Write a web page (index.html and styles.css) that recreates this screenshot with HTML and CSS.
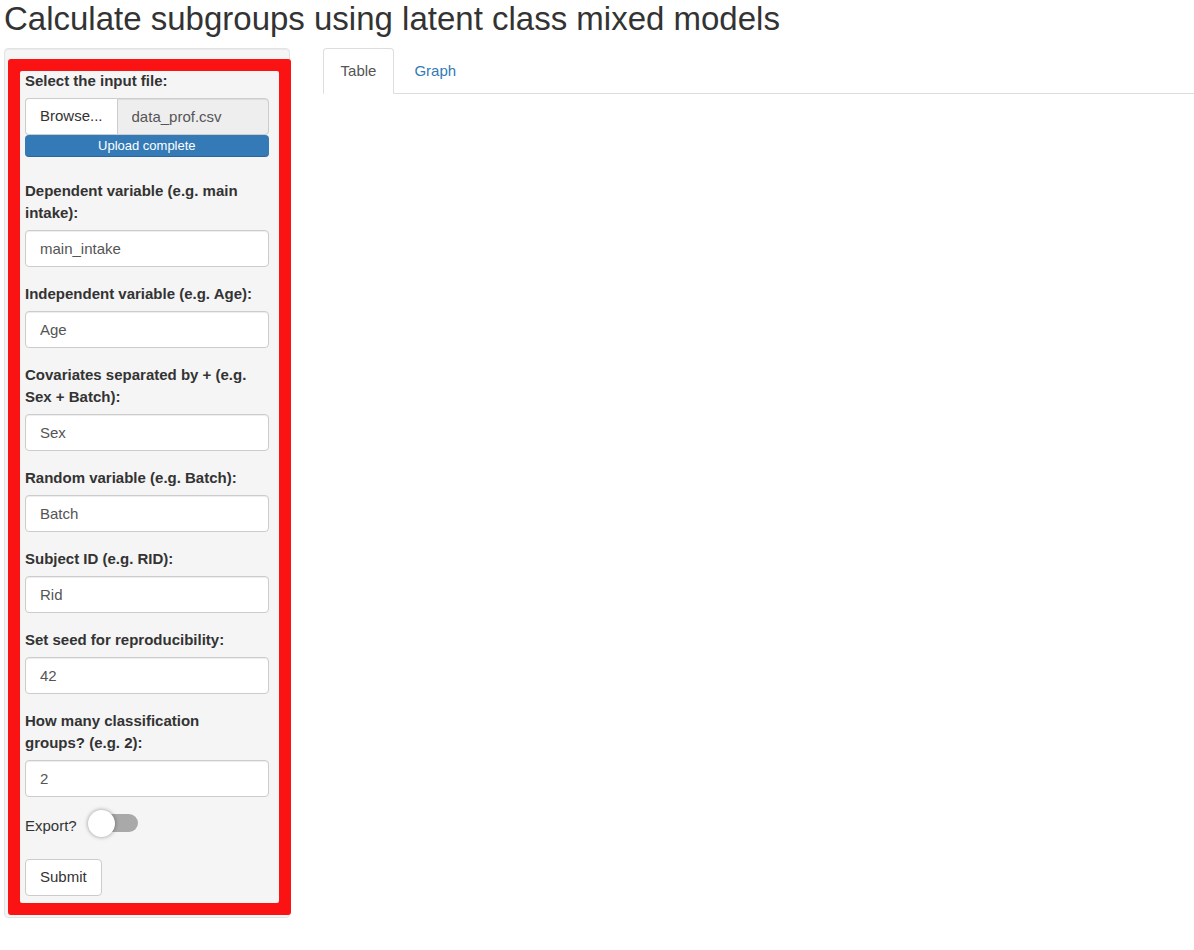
FILE: index.html
```html
<!DOCTYPE html>
<html lang="en">
<head>
<meta charset="utf-8">
<meta name="viewport" content="width=device-width, initial-scale=1">
<title>Calculate subgroups using latent class mixed models</title>
<link rel="stylesheet" href="styles.css">
</head>
<body>
<h1 class="page-title">Calculate subgroups using latent class mixed models</h1>
<div class="layout">
  <form class="panel">
    <div class="field field-file">
      <label class="label" for="file-name">Select the input file:</label>
      <div class="file-group">
        <label class="browse">Browse...<input class="file-input" type="file"></label>
        <input class="input file-name" id="file-name" type="text" value="data_prof.csv" readonly>
      </div>
      <div class="progress">Upload complete</div>
    </div>
    <div class="field">
      <label class="label" for="dependent">Dependent variable (e.g. main intake):</label>
      <input class="input" id="dependent" type="text" value="main_intake">
    </div>
    <div class="field">
      <label class="label" for="independent">Independent variable (e.g. Age):</label>
      <input class="input" id="independent" type="text" value="Age">
    </div>
    <div class="field">
      <label class="label" for="covariates">Covariates separated by + (e.g. Sex + Batch):</label>
      <input class="input" id="covariates" type="text" value="Sex">
    </div>
    <div class="field">
      <label class="label" for="random">Random variable (e.g. Batch):</label>
      <input class="input" id="random" type="text" value="Batch">
    </div>
    <div class="field">
      <label class="label" for="subject">Subject ID (e.g. RID):</label>
      <input class="input" id="subject" type="text" value="Rid">
    </div>
    <div class="field">
      <label class="label" for="seed">Set seed for reproducibility:</label>
      <input class="input" id="seed" type="text" value="42">
    </div>
    <div class="field field-last">
      <label class="label" for="groups">How many classification groups? (e.g. 2):</label>
      <input class="input" id="groups" type="text" value="2">
    </div>
    <div class="export">
      <label for="export">Export?</label>
      <input class="switch" id="export" type="checkbox">
    </div>
    <button class="button" type="button">Submit</button>
    <div class="highlight"></div>
  </form>
  <main>
    <nav class="tabs">
      <a class="tab tab-active" href="#table">Table</a>
      <a class="tab" href="#graph">Graph</a>
    </nav>
  </main>
</div>
</body>
</html>
```

FILE: styles.css
```css
* {
  box-sizing: border-box;
}

body {
  margin: 0;
  padding-left: 4px;
  font-family: "Liberation Sans", Arial, sans-serif;
  font-size: 15px;
  line-height: 22px;
  color: #333;
  background: #fff;
}

.page-title {
  margin: 0 0 11px;
  font-size: 33px;
  font-weight: 400;
  line-height: 37px;
}

.layout {
  display: grid;
  grid-template-columns: 24% minmax(0, 1fr);
  column-gap: 33px;
  align-items: start;
}

.panel {
  position: relative;
  padding: 21px 20px;
  border: 1px solid #e3e3e3;
  border-radius: 4px;
  background: #f5f5f5;
  box-shadow: inset 0 1px 1px rgba(0, 0, 0, 0.05);
}

.highlight {
  position: absolute;
  inset: 10px -2px 2px 3px;
  border: 12px solid #fb1212;
  border-radius: 3px;
  pointer-events: none;
}

/* Rounds the inner corners of the frame */
.highlight::after {
  content: "";
  position: absolute;
  inset: -2px;
  border: 2px solid #fb1212;
  border-radius: 4px;
}

.field {
  margin-bottom: 16px;
}

.field-file {
  margin-bottom: 23px;
}

.field-last {
  margin-bottom: 12px;
}

.label {
  display: block;
  margin-bottom: 6px;
  padding-right: 10px;
  font-weight: 700;
}

.input {
  display: block;
  width: 100%;
  height: 37px;
  padding: 0 14px 1px;
  border: 1px solid #ccc;
  border-radius: 4px;
  font: inherit;
  color: #555;
  background: #fff;
  box-shadow: inset 0 1px 1px rgba(0, 0, 0, 0.075);
}

.file-group {
  display: flex;
}

.browse {
  flex: none;
  padding: 6px 14px;
  border: 1px solid #ccc;
  border-right: 0;
  border-radius: 4px 0 0 4px;
  background: #fff;
}

.file-input {
  position: absolute;
  width: 1px;
  height: 1px;
  opacity: 0;
}

.file-name {
  flex: 1;
  min-width: 0;
  border-radius: 0 4px 4px 0;
  background: #eee;
}

.progress {
  border-radius: 4px;
  font-size: 13px;
  text-align: center;
  color: #fff;
  background: #337ab7;
  box-shadow: inset 0 -1px 0 rgba(0, 0, 0, 0.15);
}

.export {
  display: flex;
  align-items: flex-end;
  gap: 11px;
  height: 28px;
  margin-bottom: 22px;
}

.switch {
  appearance: none;
  display: flex;
  align-items: center;
  align-self: flex-start;
  width: 50px;
  height: 18px;
  margin: 5px 0 0;
  border-radius: 9px;
  background: linear-gradient(#a9a9a9, #a9a9a9) right center / 36px 18px no-repeat;
}

.switch::before {
  content: "";
  flex: none;
  width: 27px;
  height: 27px;
  border-radius: 50%;
  background: #fff;
  box-shadow: 0 0 4px rgba(0, 0, 0, 0.4);
}

.switch:checked::before {
  margin-left: 23px;
}

.button {
  display: block;
  height: 37px;
  padding: 0 14px 1px;
  border: 1px solid #ccc;
  border-radius: 4px;
  font: inherit;
  color: #333;
  background: #fff;
}

.tabs {
  display: flex;
  gap: 2px;
  border-bottom: 1px solid #ddd;
}

.tab {
  margin-bottom: -1px;
  padding: 11px 17px;
  border: 1px solid transparent;
  border-radius: 4px 4px 0 0;
  color: #337ab7;
  text-decoration: none;
}

.tab-active {
  border-color: #ddd #ddd #fff;
  color: #555;
  background: #fff;
}
```
